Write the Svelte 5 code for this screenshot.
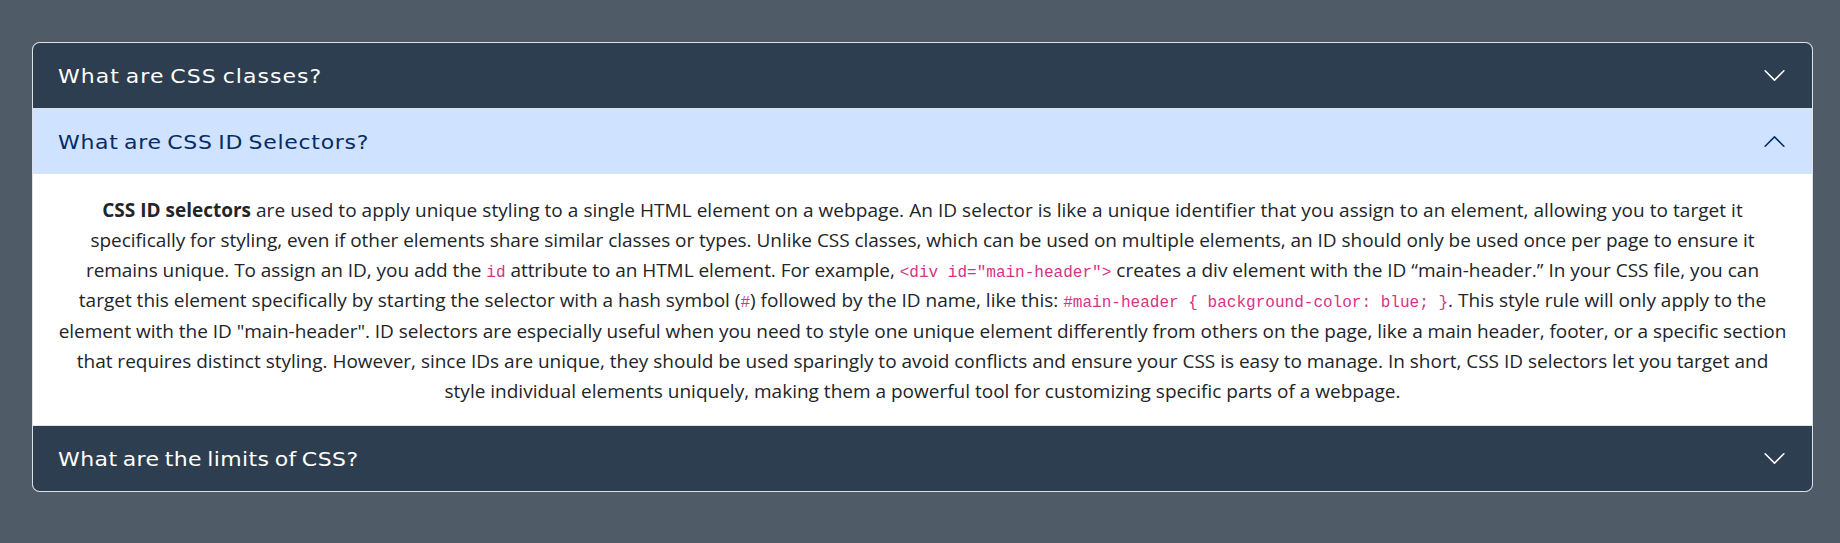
<script>
  // Each part is [kind, text, optional letter-spacing override in px].
  const intro = [
    { spacing: 0.05, parts: [['strong', 'CSS ID selectors'], ['text', ' are used to apply unique styling to a single HTML element on a webpage. An ID selector is like a unique identifier that you assign to an element, allowing you to target it']] },
    { spacing: -0.035, parts: [['text', 'specifically for styling, even if other elements share similar classes or types. Unlike CSS classes, which can be used on multiple elements, an ID should only be used once per page to ensure it']] },
    { spacing: -0.05, parts: [['text', 'remains unique. To assign an ID, you add the '], ['code', 'id'], ['text', ' attribute to an HTML element. For example, '], ['code', '<div id="main-header">'], ['text', ' creates a div element with the ID “main-header.” In your CSS file, you can', 0.015]] },
    { spacing: 0, parts: [['text', 'target this element specifically by starting the selector with a hash symbol ('], ['code', '#'], ['text', ') followed by the ID name, like this: '], ['code', '#main-header { background-color: blue; }'], ['text', '. This style rule will only apply to the']] },
    { spacing: -0.035, parts: [['text', 'element with the ID "main-header". ID selectors are especially useful when you need to style one unique element differently from others on the page, like a main header, footer, or a specific section']] },
    { spacing: -0.01, parts: [['text', 'that requires distinct styling. However, since IDs are unique, they should be used sparingly to avoid conflicts and ensure your CSS is easy to manage. In short, CSS ID selectors let you target and']] },
    { spacing: 0, parts: [['text', 'style individual elements uniquely, making them a powerful tool for customizing specific parts of a webpage.']] }
  ];

  let items = $state([
    { title: 'What are CSS classes?', tracking: 0.95, open: false, body: [] },
    { title: 'What are CSS ID Selectors?', tracking: 0.64, open: true, body: intro },
    { title: 'What are the limits of CSS?', tracking: 0.37, open: false, body: [] }
  ]);
</script>

<main class="page">
  <div class="accordion">
    {#each items as item}
      <section class="item">
        <button class="header" class:open={item.open} aria-expanded={item.open} onclick={() => (item.open = !item.open)}>
          <span class="title" style="letter-spacing: {item.tracking}px">{item.title}</span>
          <svg class="chevron" viewBox="0 0 16 16" aria-hidden="true">
            <path fill="currentColor" fill-rule="evenodd" d="M1.646 4.646a.5.5 0 0 1 .708 0L8 10.293l5.646-5.647a.5.5 0 0 1 .708.708l-6 6a.5.5 0 0 1-.708 0l-6-6a.5.5 0 0 1 0-.708z" />
          </svg>
        </button>
        {#if item.open && item.body.length}
          <div class="body">
            {#each item.body as line}
              <span class="line" style="letter-spacing: {line.spacing}px">{#each line.parts as [kind, text, spacing]}{#if kind === 'code'}<code>{text}</code>{:else if kind === 'strong'}<strong>{text}</strong>{:else}<span style="letter-spacing: {spacing ?? line.spacing}px">{text}</span>{/if}{/each}</span>
            {/each}
          </div>
        {/if}
      </section>
    {/each}
  </div>
</main>

<style>
  :global(body) {
    background: #4f5b66;
  }

  .page {
    box-sizing: border-box;
    min-height: 543px;
    padding: 42px 27px 52px 32px;
  }

  .accordion {
    border: 1px solid #dee2e6;
    border-radius: 7.5px;
    overflow: hidden;
    background: #fff;
  }

  .item + .item {
    border-top: 1px solid #dee2e6;
  }

  .header {
    display: flex;
    align-items: center;
    justify-content: space-between;
    box-sizing: border-box;
    width: 100%;
    height: 65px;
    padding: 0 25px;
    border: 0;
    background: #2c3e50;
    color: #fff;
    text-align: left;
  }

  .header.open {
    background: #cfe2ff;
    color: #052c65;
    box-shadow: inset 0 -1px 0 #dee2e6;
  }

  .title {
    padding-top: 1px;
    font: 20px/25px "DejaVu Sans", sans-serif;
    word-spacing: -2px;
    white-space: nowrap;
    transform: scaleX(1.1);
    transform-origin: left center;
  }

  .chevron {
    width: 25px;
    height: 25px;
    flex: none;
  }

  .open .chevron {
    transform: rotate(180deg);
  }

  .body {
    padding: 20.6px 25px 18.4px;
    color: #212529;
    font: 19px/30.3px "Open Sans", sans-serif;
    text-align: center;
  }

  .line {
    display: flex;
    justify-content: center;
    align-items: baseline;
    height: 30.3px;
    white-space: pre;
  }

  code {
    color: #d63384;
    font: 16.05px/1 "Liberation Mono", monospace;
    letter-spacing: 0;
  }

  strong {
    font-weight: 700;
    letter-spacing: 0;
  }
</style>
